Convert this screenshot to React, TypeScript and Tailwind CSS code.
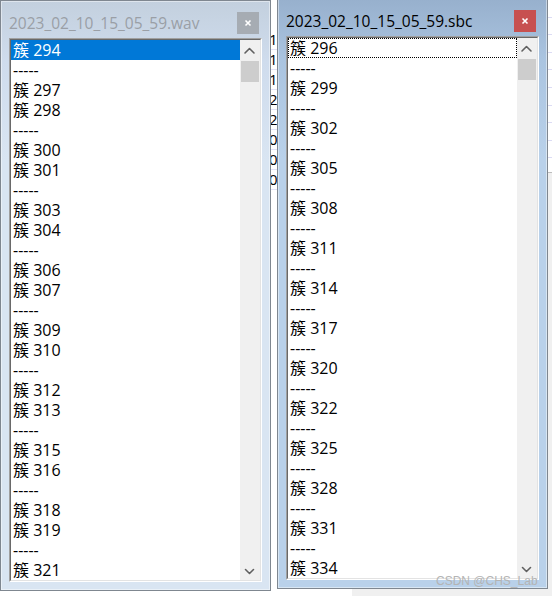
import React from "react";

const leftItems = [
  "簇 294", "-----", "簇 297", "簇 298", "-----", "簇 300", "簇 301", "-----", "簇 303",
  "簇 304", "-----", "簇 306", "簇 307", "-----", "簇 309", "簇 310", "-----", "簇 312",
  "簇 313", "-----", "簇 315", "簇 316", "-----", "簇 318", "簇 319", "-----", "簇 321",
];

const rightItems = [
  "簇 296", "-----", "簇 299", "-----", "簇 302", "-----", "簇 305", "-----", "簇 308",
  "-----", "簇 311", "-----", "簇 314", "-----", "簇 317", "-----", "簇 320", "-----",
  "簇 322", "-----", "簇 325", "-----", "簇 328", "-----", "簇 331", "-----", "簇 334",
];

const stripDigits = ["1", "1", "1", "1", "1", "2", "2", "0", "0", "0"];

function Chevron({ up }: { up?: boolean }) {
  return (
    <svg width="20" height="20" viewBox="0 0 20 20" fill="none">
      <polyline
        points={up ? "5,13 9.5,8.5 14,13" : "5.5,9.5 9.5,13.5 13.5,9.5"}
        stroke="#606060"
        strokeWidth="1.6"
        strokeLinecap="round"
        strokeLinejoin="round"
      />
    </svg>
  );
}

function ListWindow({
  title,
  active,
  items,
}: {
  title: string;
  active: boolean;
  items: string[];
}) {
  return (
    <div
      className={`flex h-[591px] w-[271px] shrink-0 flex-col border border-[#7f8790] px-[8px] shadow-[inset_0_0_0_1px_rgba(255,255,255,0.45)] ${
        active
          ? "bg-[linear-gradient(180deg,#97b0cd_0px,#aac4e0_60px,#b9d1ea_160px)]"
          : "bg-[linear-gradient(180deg,#c3d0de_0px,#cfdced_60px,#d9e5f2_160px)]"
      }`}
    >
      {/* barra del titolo */}
      <div className="flex h-[37px] items-start justify-between">
        <span
          className={`mt-[12px] whitespace-nowrap font-['Open_Sans',sans-serif] text-[15.5px] leading-[20px] ${
            active ? "text-black" : "text-[#9a9fa6]"
          }`}
        >
          {title}
        </span>
        <div
          className={`mr-[3px] mt-[11px] flex h-[22px] w-[22px] items-center justify-center ${
            active ? "bg-[#c75050]" : "bg-[#a6acb3]"
          }`}
        >
          <svg width="8" height="8" viewBox="0 0 8 8">
            <path d="M1.5 1.5L6.5 6.5M6.5 1.5L1.5 6.5" stroke="white" strokeWidth="1.6" />
          </svg>
        </div>
      </div>

      {/* listbox */}
      <div className="h-[544px] w-[253px] border border-t-[#a0a0a0] border-l-[#a0a0a0] border-r-white border-b-white">
        <div className="flex h-full w-full border border-t-[#696969] border-l-[#696969] border-r-[#e3e3e3] border-b-[#e3e3e3] bg-white">
          <ul className="w-[229px] font-['Open_Sans','Noto_Sans_CJK_SC',sans-serif] text-[16px] text-black">
            {items.map((it, i) => {
              const first = i === 0;
              if (first && !active) {
                return (
                  <li key={i} className="h-[20px] whitespace-nowrap bg-[#0078d7] pl-[2px] leading-[20px] text-white">
                    {it}
                  </li>
                );
              }
              if (first && active) {
                return (
                  <li key={i} className="h-[20px] whitespace-nowrap border border-dotted border-black pl-[1px] leading-[18px]">
                    {it}
                  </li>
                );
              }
              return (
                <li key={i} className="h-[20px] whitespace-nowrap pl-[2px] leading-[20px]">
                  {it}
                </li>
              );
            })}
          </ul>
          <div className="flex w-[20px] flex-col bg-[#f0f0f0]">
            <div className="h-[20px]">
              <Chevron up />
            </div>
            <div className="mx-[1px] mt-[1px] h-[21px] bg-[#cdcdcd]" />
            <div className="flex-1" />
            <div className="h-[20px]">
              <Chevron />
            </div>
          </div>
        </div>
      </div>
    </div>
  );
}

export default function App() {
  return (
    <div className="relative flex h-[596px] w-[552px] overflow-hidden bg-white">
      <div className="flex w-[271px] shrink-0 flex-col">
        <ListWindow title="2023_02_10_15_05_59.wav" active={false} items={leftItems} />
        <div className="flex-1 bg-white" />
      </div>

      {/* finestra dietro, tra le due */}
      <div className="flex w-[6px] shrink-0 flex-col overflow-hidden bg-white">
        <div className="mt-[30px] font-['Open_Sans',sans-serif] text-[15px] text-black">
          {stripDigits.slice(2).map((d, i) => (
            <div key={i} className="-ml-[2px] h-[20px] overflow-hidden border-b border-[#e2e2f6] leading-[19px]">
              {d}
            </div>
          ))}
        </div>
      </div>

      <div className="flex w-[271px] shrink-0 flex-col">
        <div className="mt-[-2px]">
          <ListWindow title="2023_02_10_15_05_59.sbc" active={true} items={rightItems} />
        </div>
        <div className="flex flex-1">
          <div className="w-[75px] bg-white" />
          <div className="flex-1 bg-[#f0f0f0]" />
        </div>
      </div>

      <div className="flex flex-1 flex-col">
        <div className="h-[172px] bg-white">
          {Array.from({ length: 9 }).map((_, i) => (
            <div key={i} className="h-[17.6px] border-b border-[#dcdcf4]" />
          ))}
        </div>
        <div className="flex-1 border-t border-[#bdbdbd] bg-[#f0f0f0]" />
      </div>

      <span className="absolute left-[436px] top-[574px] font-['Liberation_Sans',sans-serif] text-[12px] leading-[14px] text-[#b4b4b4]">
        CSDN @CHS_Lab
      </span>
    </div>
  );
}
